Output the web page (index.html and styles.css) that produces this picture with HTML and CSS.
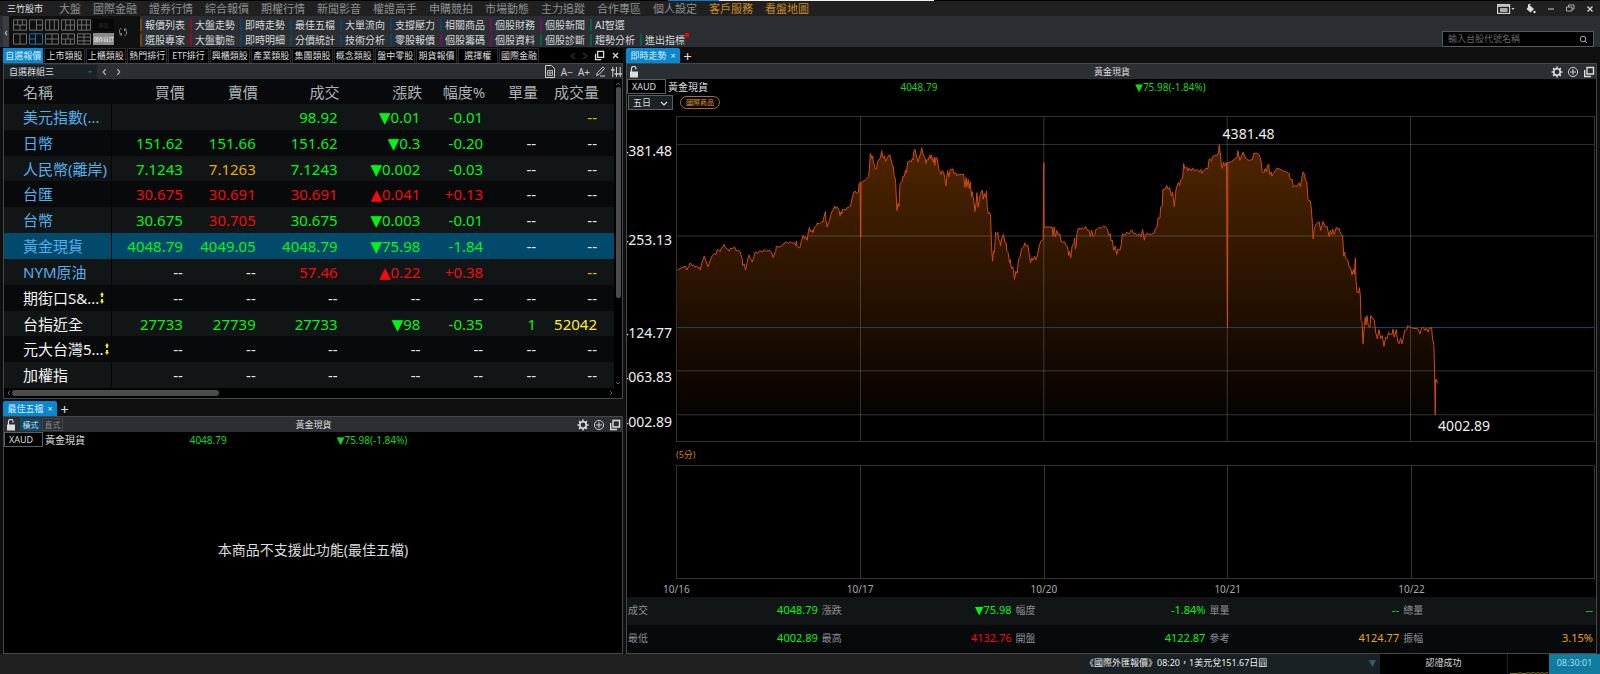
FILE: index.html
```html
<!DOCTYPE html>
<html lang="zh-Hant">
<head>
    <meta charset="UTF-8">
    <meta name="viewport" content="width=device-width, initial-scale=1.0">
    <title>三竹股市</title>
    <link rel="stylesheet" href="styles.css">
</head>
<body>
    <!-- shared icons -->
    <svg class="icon-defs" width="0" height="0">
        <symbol id="icon-lock" viewBox="0 0 10 12">
            <rect x="1" y="5.500" width="8" height="6" fill="currentColor"/>
            <path d="M2.500 6V3a2 2 0 0 1 4.500-.5v1" fill="none" stroke="currentColor" stroke-width="1.200"/>
        </symbol>
        <symbol id="icon-gear" viewBox="0 0 12 12">
            <circle cx="6" cy="6" r="3.200" fill="none" stroke="currentColor" stroke-width="1.600"/>
            <path d="M6 .5v2M6 9.500v2M.5 6h2M9.500 6h2M2.100 2.100l1.400 1.400M8.500 8.500l1.400 1.400M2.100 9.900l1.400-1.400M8.500 3.500l1.400-1.400" stroke="currentColor" stroke-width="1.600"/>
        </symbol>
        <symbol id="icon-plus-circle" viewBox="0 0 12 12">
            <circle cx="6" cy="6" r="4.600" fill="none" stroke="currentColor" stroke-width=".9"/>
            <path d="M6 3v6M3 6h6" stroke="currentColor" stroke-width=".9"/>
        </symbol>
        <symbol id="icon-copy" viewBox="0 0 12 12">
            <path d="M4 1.500h6.500V8H4z" fill="none" stroke="currentColor" stroke-width="1.400"/>
            <path d="M1.700 4v6.500H8" fill="none" stroke="currentColor" stroke-width="1.400"/>
        </symbol>
        <symbol id="icon-updown" viewBox="0 0 4 12">
            <path d="M2 0l2 3H3v2H1V3H0zM2 12l2-3H3V7H1v2H0z" fill="currentColor"/>
        </symbol>
    </svg>

    <div class="app">
        <div class="top-edge"><span class="edge-blue"></span><span class="edge-white"></span></div>
        <nav class="menu-bar">
            <span class="brand">三竹股市</span>
            <a href="#">大盤</a>
            <a href="#">國際金融</a>
            <a href="#">證券行情</a>
            <a href="#">綜合報價</a>
            <a href="#">期權行情</a>
            <a href="#">新聞影音</a>
            <a href="#">權證高手</a>
            <a href="#">申購競拍</a>
            <a href="#">市場動態</a>
            <a href="#">主力追蹤</a>
            <a href="#">合作專區</a>
            <a href="#">個人設定</a>
            <a href="#" class="featured">客戶服務</a>
            <a href="#" class="featured">看盤地圖</a>
            <div class="window-buttons">
                <button aria-label="版面"><svg width="18" height="10" viewBox="0 0 18 10"><rect x=".6" y=".6" width="12" height="8.800" fill="none" stroke="#ccc" stroke-width="1.200"/><path d="M.6 2h12" stroke="#ddd" stroke-width="1.600"/><path d="M3 4h7.500v4H3z" fill="#aaa"/><path d="M14.500 4h3L16 6z" fill="#ddd"/></svg></button>
                <button aria-label="配色"><svg width="10" height="10" viewBox="0 0 10 10"><path d="M3.500 1l4.500 4-3.500 3.500L.5 5z" fill="#ddd"/><path d="M2.500 3V.5h2" stroke="#ddd" fill="none"/><circle cx="8.500" cy="8" r="1.200" fill="#ddd"/></svg></button>
                <button aria-label="最小化"><svg width="8" height="8" viewBox="0 0 8 8"><path d="M1 4h6" stroke="#ccc"/></svg></button>
                <button aria-label="還原"><svg width="9" height="9" viewBox="0 0 9 9"><path d="M.5 3h5.500v4H.5zM2.500 3V1h5.500v4H6" fill="none" stroke="#bbb" stroke-width=".9"/></svg></button>
                <button aria-label="關閉"><svg width="8" height="8" viewBox="0 0 8 8"><path d="M1.500 1.500l5 5M6.500 1.500l-5 5" stroke="#ddd" stroke-width="1.200"/></svg></button>
            </div>
        </nav>

        <div class="toolbar">
            <button class="collapse" aria-label="收合">‹</button>
            <div class="layouts">
                <div class="layout-grid">
                    <button aria-label="版面 1"><svg viewBox="0 0 15 12"><path d="M.5.5h14v11H.5zM.5 6h14M5 .5V6M10 .5V6M7.500 6v5.500"/></svg></button>
                    <button aria-label="版面 2"><svg viewBox="0 0 15 12"><path d="M.5.5h14v11H.5zM8 .5v11M8 6h6.500"/></svg></button>
                    <button aria-label="版面 3"><svg viewBox="0 0 15 12"><path d="M.5.5h14v11H.5zM5 .5v11M10 .5v11"/></svg></button>
                    <button aria-label="版面 4"><svg viewBox="0 0 15 12"><path d="M.5.5h14v11H.5zM5 .5v11M10 .5v11M5 6h9.500"/></svg></button>
                    <button aria-label="版面 5"><svg viewBox="0 0 15 12"><path d="M.5.5h14v11H.5zM5 .5v11M10 .5v11M.5 6h14"/></svg></button>
                    <button class="preset">預設</button>
                    <button aria-label="版面 6"><svg viewBox="0 0 15 12"><path d="M.5.5h14v11H.5zM7.500 .5v11"/></svg></button>
                    <button aria-label="版面 7" class="selected"><svg viewBox="0 0 15 12"><path d="M.5.5h14v11H.5zM7 .5v11M.5 6H7"/></svg></button>
                    <button aria-label="版面 8"><svg viewBox="0 0 15 12"><path d="M.5.5h14v11H.5zM7.500 .5v11M.5 6h14"/></svg></button>
                    <button aria-label="版面 9"><svg viewBox="0 0 15 12"><path d="M.5.5h14v11H.5zM.5 6h14M5 6v5.500M10 6v5.500M7.500 .5V6"/></svg></button>
                    <button aria-label="版面 10"><svg viewBox="0 0 15 12"><path d="M.5.5h14v11H.5zM7.500 .5v11M.5 4h14M.5 8h14"/></svg></button>
                    <button class="save">儲存自訂</button>
                </div>
                <button class="refresh" aria-label="重新整理"><svg width="10" height="12" viewBox="0 0 10 12"><path d="M3.500 2Q1 3.500 1.500 6T3.500 9M6.500 10Q9 8.500 8.500 6T6.500 3M1.500 9h2V7M8.500 3h-2v2" fill="none" stroke="#888"/></svg></button>
            </div>
            <div class="quick-links">
                <a href="#" class="brown">報價列表</a>
                <a href="#" class="red">大盤走勢</a>
                <a href="#" class="blue">即時走勢</a>
                <a href="#" class="blue">最佳五檔</a>
                <a href="#" class="blue">大單流向</a>
                <a href="#" class="blue">支撐壓力</a>
                <a href="#" class="blue">相關商品</a>
                <a href="#" class="purple">個股財務</a>
                <a href="#" class="purple">個股新聞</a>
                <a href="#" class="green">AI智選</a>
                <span></span>
                <a href="#" class="brown">選股專家</a>
                <a href="#" class="red">大盤動態</a>
                <a href="#" class="blue">即時明細</a>
                <a href="#" class="blue">分價統計</a>
                <a href="#" class="blue">技術分析</a>
                <a href="#" class="blue">零股報價</a>
                <a href="#" class="purple">個股籌碼</a>
                <a href="#" class="purple">個股資料</a>
                <a href="#" class="green">個股診斷</a>
                <a href="#" class="green">趨勢分析</a>
                <a href="#" class="green has-dot">進出指標</a>
            </div>
            <div class="search">
                <input type="text" aria-label="搜尋" placeholder="輸入台股代號名稱">
                <svg width="9" height="9" viewBox="0 0 9 9"><circle cx="4" cy="4" r="2.800" fill="none" stroke="#aaa"/><path d="M6 6l2 2" stroke="#aaa"/></svg>
            </div>
        </div>

        <main class="workspace">
            <div class="left-side">
                <div class="tab-row">
                    <div class="tabs">
                        <button class="active">自選報價</button>
                        <button>上市類股</button>
                        <button>上櫃類股</button>
                        <button>熱門排行</button>
                        <button>ETF排行</button>
                        <button>興櫃類股</button>
                        <button>產業類股</button>
                        <button>集團類股</button>
                        <button>概念類股</button>
                        <button>盤中零股</button>
                        <button>期貨報價</button>
                        <button>選擇權</button>
                        <button>國際金融</button>
                    </div>
                    <div class="tab-tools">
                        <button class="dim" aria-label="上一頁"><svg width="6" height="8" viewBox="0 0 6 8"><path d="M5 1L1 4l4 3" fill="none" stroke="#444"/></svg></button>
                        <button class="dim" aria-label="下一頁"><svg width="6" height="8" viewBox="0 0 6 8"><path d="M1 1l4 3-4 3" fill="none" stroke="#444"/></svg></button>
                        <button aria-label="複製視窗"><svg width="11" height="11"><use href="#icon-copy"/></svg></button>
                        <button aria-label="關閉"><svg width="9" height="9" viewBox="0 0 9 9"><path d="M2 2l5 5M7 2L2 7" stroke="#ddd" stroke-width="1.200"/></svg></button>
                    </div>
                </div>
                <section class="panel quotes">
                    <div class="panel-bar">
                        <div class="select-box group-select">
                            <select aria-label="自選群組"><option>自選群組三</option></select>
                            <svg width="6" height="4" viewBox="0 0 6 4"><path d="M1 1h4L3 3.500z" fill="#2f6076"/></svg>
                        </div>
                        <button class="step" aria-label="上一組"><svg width="5" height="8" viewBox="0 0 6 10"><path d="M4.500 1.500L1.500 5l3 3.500" fill="none" stroke="#ccc" stroke-width="1.300"/></svg></button>
                        <button class="step" aria-label="下一組"><svg width="5" height="8" viewBox="0 0 6 10"><path d="M1.500 1.500l3 3.500-3 3.500" fill="none" stroke="#ccc" stroke-width="1.300"/></svg></button>
                        <div class="bar-tools">
                            <button aria-label="報表"><svg width="12" height="13" viewBox="0 0 12 13"><path d="M1.500.5h6l3 3v9h-9z" fill="none" stroke="#ccc"/><path d="M3.500 5.500h5v5h-5zM3.500 8h5M6 5.500v5" fill="none" stroke="#ccc" stroke-width=".8"/></svg></button>
                            <button>A−</button>
                            <button>A+</button>
                            <button aria-label="編輯"><svg width="11" height="11" viewBox="0 0 11 11"><path d="M1.500 9.500l1-3L8 1l1.500 1.500-5.500 6zM5 10h5" fill="none" stroke="#ccc"/></svg></button>
                            <button aria-label="設定"><svg width="11" height="12" viewBox="0 0 11 12"><path d="M1.800 1v10M5.500 1v10M9.200 1v10" stroke="#ccc"/><path d="M0 4h3.600M3.700 8h3.600M7.400 8H11" stroke="#ccc" stroke-width="1.600"/></svg></button>
                        </div>
                    </div>
                    <div class="table-area">
                        <table>
                            <thead>
                                <tr><th class="name">名稱</th><th class="c-bid">買價</th><th class="c-ask">賣價</th><th class="c-deal">成交</th><th class="c-chg">漲跌</th><th class="c-pct">幅度%</th><th class="c-unit">單量</th><th class="vol">成交量</th></tr>
                            </thead>
                            <tbody>
                                <tr><td class="name">美元指數(...</td><td></td><td></td><td class="down">98.92</td><td class="down">▼0.01</td><td class="down">-0.01</td><td></td><td class="vol dim-yellow">--</td></tr>
                                <tr><td class="name">日幣</td><td class="down">151.62</td><td class="down">151.66</td><td class="down">151.62</td><td class="down">▼0.3</td><td class="down">-0.20</td><td>--</td><td class="vol">--</td></tr>
                                <tr><td class="name">人民幣(離岸)</td><td class="down">7.1243</td><td class="flat">7.1263</td><td class="down">7.1243</td><td class="down">▼0.002</td><td class="down">-0.03</td><td>--</td><td class="vol">--</td></tr>
                                <tr><td class="name">台匯</td><td class="up">30.675</td><td class="up">30.691</td><td class="up">30.691</td><td class="up">▲0.041</td><td class="up">+0.13</td><td>--</td><td class="vol">--</td></tr>
                                <tr><td class="name">台幣</td><td class="down">30.675</td><td class="up">30.705</td><td class="down">30.675</td><td class="down">▼0.003</td><td class="down">-0.01</td><td>--</td><td class="vol">--</td></tr>
                                <tr class="current"><td class="name">黃金現貨</td><td class="down">4048.79</td><td class="down">4049.05</td><td class="down">4048.79</td><td class="down">▼75.98</td><td class="down">-1.84</td><td>--</td><td class="vol">--</td></tr>
                                <tr><td class="name">NYM原油</td><td>--</td><td>--</td><td class="up">57.46</td><td class="up">▲0.22</td><td class="up">+0.38</td><td></td><td class="vol dim-yellow">--</td></tr>
                                <tr><td class="name domestic">期街口S&amp;...<svg class="mark" width="4" height="12"><use href="#icon-updown"/></svg></td><td>--</td><td>--</td><td>--</td><td>--</td><td>--</td><td>--</td><td class="vol">--</td></tr>
                                <tr><td class="name domestic">台指近全</td><td class="down">27733</td><td class="down">27739</td><td class="down">27733</td><td class="down">▼98</td><td class="down">-0.35</td><td class="down">1</td><td class="vol yellow">52042</td></tr>
                                <tr><td class="name domestic">元大台灣5...<svg class="mark" width="4" height="12"><use href="#icon-updown"/></svg></td><td>--</td><td>--</td><td>--</td><td>--</td><td>--</td><td>--</td><td class="vol">--</td></tr>
                                <tr><td class="name domestic">加權指</td><td>--</td><td>--</td><td>--</td><td>--</td><td>--</td><td>--</td><td class="vol">--</td></tr>
                            </tbody>
                        </table>
                        <div class="scroll-v"><svg width="6" height="6" viewBox="0 0 6 6"><path d="M1 4l2-2 2 2" fill="none" stroke="#666"/></svg><span class="thumb"></span><span class="rest"></span><svg width="6" height="6" viewBox="0 0 6 6"><path d="M1 2l2 2 2-2" fill="none" stroke="#666"/></svg></div>
                    </div>
                    <div class="scroll-h"><svg width="6" height="6" viewBox="0 0 6 6"><path d="M4 1L2 3l2 2" fill="none" stroke="#666"/></svg><span class="thumb"></span><span class="rest"></span><svg width="6" height="6" viewBox="0 0 6 6"><path d="M2 1l2 2-2 2" fill="none" stroke="#666"/></svg></div>
                </section>

                <div class="tab-row lower">
                    <button class="win-tab">最佳五檔 <span>×</span></button>
                    <button class="add" aria-label="新增分頁">+</button>
                </div>
                <section class="panel depth">
                    <div class="panel-bar titled">
                        <div class="bar-left">
                            <button aria-label="鎖定"><svg width="10" height="12"><use href="#icon-lock"/></svg></button>
                            <button class="mode on">橫式</button>
                            <button class="mode">直式</button>
                        </div>
                        <h2>黃金現貨</h2>
                        <div class="bar-right">
                            <button aria-label="設定"><svg width="12" height="12"><use href="#icon-gear"/></svg></button>
                            <button aria-label="加入"><svg width="12" height="12"><use href="#icon-plus-circle"/></svg></button>
                            <button aria-label="複製視窗"><svg width="12" height="12"><use href="#icon-copy"/></svg></button>
                        </div>
                    </div>
                    <div class="summary">
                        <input type="text" aria-label="商品代號" value="XAUD">
                        <span>黃金現貨</span>
                        <span class="num">4048.79</span>
                        <span class="num">▼75.98(-1.84%)</span>
                    </div>
                    <p class="unsupported">本商品不支援此功能(最佳五檔)</p>
                </section>
            </div>

            <div class="right-side">
                <div class="tab-row">
                    <button class="win-tab">即時走勢 <span>×</span></button>
                    <button class="add" aria-label="新增分頁">+</button>
                </div>
                <section class="panel trend">
                    <div class="panel-bar titled">
                        <div class="bar-left">
                            <button aria-label="鎖定"><svg width="10" height="12"><use href="#icon-lock"/></svg></button>
                        </div>
                        <h2>黃金現貨</h2>
                        <div class="bar-right">
                            <button aria-label="設定"><svg width="12" height="12"><use href="#icon-gear"/></svg></button>
                            <button aria-label="加入"><svg width="12" height="12"><use href="#icon-plus-circle"/></svg></button>
                            <button aria-label="複製視窗"><svg width="12" height="12"><use href="#icon-copy"/></svg></button>
                        </div>
                    </div>
                    <div class="summary">
                        <input type="text" aria-label="商品代號" value="XAUD">
                        <span>黃金現貨</span>
                        <span class="num">4048.79</span>
                        <span class="num">▼75.98(-1.84%)</span>
                    </div>
                    <div class="range-row">
                        <div class="select-box range-select">
                            <select aria-label="期間"><option>五日</option></select>
                            <svg width="8" height="6" viewBox="0 0 8 6"><path d="M1 1l3 3 3-3" fill="none" stroke="#ddd" stroke-width="1.200"/></svg>
                        </div>
                        <span class="badge">國際商品</span>
                    </div>

                    <div class="chart">
                        <div class="price-row">
                            <div class="axis">
                                <span class="tick t1">4381.48</span>
                                <span class="tick t2">4253.13</span>
                                <span class="tick t3">4124.77</span>
                                <span class="tick t4">4063.83</span>
                                <span class="tick t5">4002.89</span>
                            </div>
                            <div class="plot">
                                <svg viewBox="0 0 2755 981" preserveAspectRatio="none">
                                    <defs>
                                        <linearGradient id="area-fill" gradientUnits="userSpaceOnUse" x1="0" y1="83" x2="0" y2="901">
                                            <stop offset="0" stop-color="#502500"/>
                                            <stop offset="1" stop-color="#050200"/>
                                        </linearGradient>
                                    </defs>
                                    <path id="area" fill="url(#area-fill)"/>
                                    <g class="grid-lines">
                                        <path d="M551 0V981M1102 0V981M1653 0V981M2204 0V981M0 83H2755M0 360H2755M0 768H2755M0 901H2755"/>
                                        <path class="reference" d="M0 637H2755"/>
                                    </g>
                                    <path id="line"/>
                                </svg>
                                <span class="peak">4381.48</span>
                                <span class="trough">4002.89</span>
                            </div>
                        </div>
                        <div class="volume-label">(5分)</div>
                        <div class="volume-row"><span></span><span></span><span></span><span></span><span></span></div>
                        <div class="dates"><span>10/16</span><span>10/17</span><span>10/20</span><span>10/21</span><span>10/22</span></div>
                    </div>

                    <dl class="stats">
                        <div><dt>成交</dt><dd class="down">4048.79</dd></div>
                        <div><dt>漲跌</dt><dd class="down">▼75.98</dd></div>
                        <div><dt>幅度</dt><dd class="down">-1.84%</dd></div>
                        <div><dt>單量</dt><dd class="down">--</dd></div>
                        <div><dt>總量</dt><dd class="down">--</dd></div>
                        <div><dt>最低</dt><dd class="down">4002.89</dd></div>
                        <div><dt>最高</dt><dd class="up">4132.76</dd></div>
                        <div><dt>開盤</dt><dd class="down">4122.87</dd></div>
                        <div><dt>參考</dt><dd class="flat">4124.77</dd></div>
                        <div><dt>振幅</dt><dd class="flat">3.15%</dd></div>
                    </dl>
                </section>
            </div>
        </main>

        <footer class="status-bar">
            <div class="ticker"><span>《國際外匯報價》08:20，1美元兌151.67日圓</span><span class="ticker-arrow">▼</span></div>
            <div class="auth">認證成功</div>
            <div class="traffic"><svg width="38" height="3" viewBox="0 0 38 3"><path d="M0 2.500h8l2-1 2 1h4l2-1 2 1 3-1 3 1 2-1 2 1 2-1 2 1 4-1" fill="none" stroke="#7a7a18"/></svg></div>
            <div class="clock">08:30:01</div>
        </footer>
    </div>

    <script>
        // Price points, each part relative to its own offset
        const parts = [
            { dx: -169, dy: -169, points: '170,632 184,625 190,622 195,621 198,632 204,622 209,610 214,619 219,617 224,624 227,619 231,624 236,624 239,632 243,612 247,600 251,589 256,605 262,622 268,605 275,589 281,581 286,586 290,570 294,572 299,575 303,564 308,561 310,554 315,565 321,569 326,575 329,567 336,567 342,562 347,574 352,572 359,577 362,590 365,598 366,618 371,614 375,632 379,612 383,595 386,586 389,597 393,602 395,608 400,592 403,580 407,577 411,583 417,574 427,577 431,570 438,575 446,573 453,579 458,594 463,580 466,575 467,560 475,563 485,559 490,551 500,548 504,552 509,546 514,551 520,549 526,558 527,544 530,561 538,565 543,543 548,527 552,538 555,530 560,542 564,513 567,503 570,517 575,511 578,519 582,502 588,497 590,490 598,492 603,487 607,487 610,473 615,455 616,478 620,502 625,487 628,480 632,460 638,450 643,438 647,446 650,441 655,447 659,468 662,455 664,462 667,448 671,450 678,449 680,443 690,440 694,420 700,396 704,393 708,400 714,396 716,370 719,367 721,532 722,367 728,364 735,360 745,349 748,310 750,279 755,295 757,287 759,305 763,318 765,327 769,325 771,303 776,299 780,292 784,271 787,289 790,294 792,286 796,303 800,295 805,285 808,283 811,293 814,305 816,318 819,318 821,345 824,352 826,370 829,440 830,452 833,430 836,440 839,370 845,365 848,348 852,348 855,331 858,338 862,305 868,301 872,305 876,295 878,299 880,275 884,267 886,275 890,293 894,305 897,290 901,280 904,262 908,280 911,288 915,295 917,310 920,298 924,299 928,284 931,295 933,283 936,296 939,306 942,290 943,316 947,292 950,293 953,308 956,330 960,336 962,343 966,331 970,335 973,352 977,377 980,345 982,331 986,350 990,329 998,326 1001,340 1007,338 1010,347 1016,343 1022,343' },
            { dx: 851, dy: -49, points: '10,222 14,262 18,232 20,260 24,238 27,265 30,245 34,290 36,275 41,305 44,335 47,315 50,278 54,322 58,295 61,280 66,270 69,298 72,280 76,292 79,273 81,320 84,342 88,338 91,345 94,440 97,485 100,455 103,458 106,398 110,402 113,398 115,418 119,425 121,438 125,415 130,405 134,428 138,430 140,455 144,460 148,490 150,480 154,508 158,502 160,515 163,540 167,515 171,522 175,480 180,472 184,448 190,443 194,430 198,440 203,437 207,462 211,490 215,475 218,483 223,470 227,482 233,462 238,435 244,423 249,420 251,187 252,382 276,382 279,410 282,382 286,412 290,392 294,405 299,402 304,428 314,427 318,438 322,440 326,468 328,455 332,475 336,440 341,432 344,415 346,448 349,435 350,405 355,385 361,389 364,384 370,389 376,380 382,392 387,392 391,410 395,392 399,410 405,404 406,391 413,387 418,382 424,385 430,379 437,382 442,388 446,407 451,402 453,424 457,422 461,452 466,440 470,465 474,448 480,452 483,438 487,403 495,406 500,398 507,402 515,390 521,402 528,402 532,408 538,402 543,412 548,389 553,422 556,405 561,401 567,405 575,403 583,400 586,388 591,382 594,355 600,355 602,322 607,318 609,268 616,268 620,256 625,268 629,262 634,288 638,276 643,320 648,270 652,255 656,247 659,256 663,238 668,235 671,190 675,205 680,200 684,212 688,203 694,212 698,203 703,212 711,208 718,215 723,208 726,220 730,212 738,205 744,205 748,175 755,182 757,170 764,165 772,165 776,155 778,133 782,165 784,188 787,205 791,185 794,198 797,188 800,187 803,686 804,187 815,184 824,176 831,172 834,151 840,180 846,165 850,155 856,170 862,178 868,180 878,178 881,160 890,158 897,162 902,175 905,190 907,215 912,218 916,205 920,215 923,195 927,193 929,222 934,215 936,228 942,218 950,205 960,206 970,212 982,217 988,220 991,238 997,238 1001,262 1007,255 1012,260 1018,248 1022,260 1026,235 1030,215 1035,225 1037,240 1041,243 1045,300 1052,303 1055,330 1058,372 1060,418' },
            { dx: 1691, dy: 11, points: '224,325 230,312 238,306 243,332 250,305 257,322 262,320 268,350 272,332 276,345 279,328 284,345 290,322 294,330 298,325 302,340 309,348 312,410 315,398 317,415 321,418 325,425 329,445 333,445 337,467 341,450 344,465 347,415 349,485 352,520 357,520 359,505 362,530 364,605 367,608 370,675 374,620 377,595 379,618 382,590 386,622 391,625 393,590 399,597 404,605 408,640 413,660 418,632 423,660 428,650 433,683 438,655 442,660 447,640 450,648 453,645 457,648 460,630 464,655 470,632 474,668 478,675 483,658 487,675 492,655 495,635 501,633 504,620 510,624 520,628 535,630 541,645 546,628 551,625 556,635 560,628 566,640 568,630 576,626 579,660 583,680 585,760 587,890 588,785 590,782 592,793 595,790' }
        ];

        const coords = [];
        parts.forEach(part => {
            part.points.split(' ').forEach(pair => {
                const [x, y] = pair.split(',').map(Number);
                coords.push(`${x + part.dx} ${y + part.dy}`);
            });
        });

        const linePath = 'M' + coords.join('L');
        document.getElementById('line').setAttribute('d', linePath);
        document.getElementById('area').setAttribute('d', linePath + 'V901H1Z');
    </script>
</body>
</html>
```

FILE: styles.css
```css
* {
    box-sizing: border-box;
}

body {
    margin: 0;
    background-color: #000;
    color: #ddd;
    font-family: "Noto Sans", "DejaVu Sans", "Noto Sans CJK TC", sans-serif;
    font-size: 10px;
    line-height: 14px;
}

button,
input,
select {
    font: inherit;
    color: inherit;
    background: none;
    border: 0;
    padding: 0;
    margin: 0;
}

button {
    display: flex;
    align-items: center;
    justify-content: center;
    white-space: nowrap;
    cursor: pointer;
}

a {
    color: inherit;
    text-decoration: none;
    white-space: nowrap;
}

.icon-defs {
    position: absolute;
}

.app {
    display: flex;
    flex-direction: column;
    height: 100vh;
    min-height: 600px;
    overflow: hidden;
}

.top-edge {
    display: flex;
    height: 1px;
    flex: none;
    padding-left: 41.75%;
}

.edge-blue {
    width: 5.5%;
    background-color: #0a78d0;
}

.edge-white {
    width: 23%;
    background-color: #eee;
}

/* menu bar */
.menu-bar {
    display: flex;
    align-items: center;
    gap: 12px;
    height: 15px;
    flex: none;
    padding: 0 6px 0 7px;
    background-color: #202020;
    color: #8c9093;
    font-size: 11px;
}

.brand {
    color: #e0e0e0;
    font-size: 9px;
    margin-right: 4px;
}

.featured {
    color: #c88c1e;
}

.window-buttons {
    display: flex;
    align-items: center;
    gap: 11px;
    margin-left: auto;
}

/* toolbar */
.toolbar {
    display: flex;
    height: 31px;
    flex: none;
    padding-left: 3px;
    background-color: #2b2f33;
}

.collapse {
    width: 6px;
    background-color: #3a3e42;
}

.layouts {
    display: flex;
    align-items: center;
    gap: 4px;
    width: 131px;
    padding-left: 4px;
    background-color: #101010;
}

.layout-grid {
    display: grid;
    grid-template-columns: repeat(5, 14px) 21px;
    grid-auto-rows: 12px;
    gap: 2px;
}

.layout-grid svg {
    width: 14px;
    height: 12px;
    fill: none;
    stroke: #777;
    stroke-width: 1;
}

.layout-grid .selected svg {
    stroke: #1e7ab8;
}

.preset,
.save {
    font-size: 5px;
}

.preset {
    background-color: #080808;
    color: #333;
}

.save {
    background-color: #8a8a8a;
    color: #fff;
}

.quick-links {
    display: grid;
    grid-template-columns: repeat(11, 50px);
    grid-template-rows: 15px 15px;
    align-items: center;
    padding-top: 1px;
    color: #d8dadc;
}

.quick-links a {
    border-left-width: 2px;
    border-left-style: solid;
    padding-left: 3px;
    line-height: 12px;
}

.brown {
    border-color: #6e4a0c;
}

.red {
    border-color: #a00a14;
}

.blue {
    border-color: #0c4462;
}

.purple {
    border-color: #6a1560;
}

.green {
    border-color: #086048;
}

.has-dot {
    position: relative;
}

.has-dot::after {
    content: "";
    position: absolute;
    top: -1px;
    right: 1px;
    width: 4px;
    height: 4px;
    background-color: #f00;
}

.search {
    display: flex;
    align-items: center;
    align-self: flex-end;
    width: 152px;
    height: 16px;
    margin: 0 6px 0 auto;
    padding: 0 5px;
    border: 1px solid #555a5e;
    background-color: #000;
}

.search input {
    flex: 1;
    min-width: 0;
    font-size: 9px;
}

.search input::placeholder {
    color: #666;
}

/* workspace */
.workspace {
    display: grid;
    grid-template-columns: 620fr 971fr;
    gap: 3px;
    flex: 1;
    min-height: 0;
    padding: 0 3px;
    background-color: #0f0f0f;
}

.left-side,
.right-side {
    display: flex;
    flex-direction: column;
    min-width: 0;
    min-height: 0;
}

.tab-row {
    display: flex;
    flex: none;
    height: 16px;
    padding-top: 1px;
}

.tab-row.lower {
    height: 17px;
    padding-top: 2px;
}

.tabs {
    display: grid;
    grid-template-columns: repeat(13, 1fr);
    gap: 1px;
    width: 86.5%;
}

.tabs button {
    background-color: #000;
    border: 1px solid #2c2c2c;
    font-size: 9px;
}

.tabs button.active,
.win-tab {
    background-color: #0c86cc;
    border-color: #0c86cc;
    color: #d8f0ff;
}

.tab-tools {
    display: flex;
    flex: 1;
    justify-content: flex-end;
    gap: 6px;
    padding-right: 3px;
    background-color: #000;
}

.win-tab {
    width: 54px;
    gap: 4px;
    border-radius: 2px 2px 0 0;
    font-size: 9px;
}

.add {
    width: 15px;
    font-size: 15px;
}

.panel {
    display: flex;
    flex-direction: column;
    min-height: 0;
    border: 1px solid #44484b;
    background-color: #000;
}

.panel-bar {
    display: flex;
    align-items: center;
    flex: none;
    height: 15px;
    background-color: #2b2f33;
}

.panel-bar h2 {
    margin: 0;
    font-size: 9px;
    font-weight: normal;
    color: #ddd;
}

.bar-left,
.bar-right {
    display: flex;
    flex: 1;
    align-items: center;
    gap: 4px;
}

.bar-left {
    padding-left: 2px;
}

.bar-right {
    justify-content: flex-end;
    padding-right: 1px;
}

.select-box {
    position: relative;
    background-color: #1b2226;
}

.select-box select {
    display: block;
    appearance: none;
    width: 100%;
    height: 100%;
}

.select-box svg {
    position: absolute;
    top: 5px;
    right: 4px;
}

.group-select {
    width: 93px;
    height: 14px;
    padding-left: 5px;
    font-size: 9px;
}

.step {
    width: 14px;
}

.bar-tools {
    display: flex;
    align-items: center;
    gap: 5px;
    margin-left: auto;
    color: #ccc;
}

.mode {
    width: 21px;
    height: 13px;
    border: 1px solid #44484b;
    color: #8c9093;
    font-size: 8px;
}

.mode.on {
    background-color: #0e4a66;
    border-color: #0e4a66;
    color: #cde;
}

.bar-left .mode + .mode {
    margin-left: -3px;
}

/* quotes */
.quotes {
    flex: 336;
}

.table-area {
    display: flex;
    flex: 1;
    min-height: 0;
}

table {
    flex: 1;
    height: 100%;
    border-collapse: collapse;
    table-layout: fixed;
    font-size: 15px;
    line-height: 20px;
    color: #e8e8e8;
}

th,
td {
    padding: 0 4px 0 0;
    text-align: right;
    font-weight: normal;
    white-space: nowrap;
}

th {
    height: 25px;
    padding-right: 2px;
    color: #aeb2b5;
    background-color: #07090a;
}

tbody tr {
    background-color: #07090b;
}

tbody tr:nth-child(odd) {
    background-color: #121515;
}

tbody tr.current {
    background-color: #024a6c;
}

.name {
    width: 108px;
    padding: 0 0 0 19px;
    text-align: left;
}

td.name {
    color: #52b0ec;
    border-right: 1px solid #050607;
}

td.name.domestic {
    color: #f4f4f4;
}

.c-bid {
    width: 75px;
}

.c-ask {
    width: 73px;
}

.c-deal {
    width: 82px;
}

.c-chg {
    width: 83px;
}

.c-pct {
    width: 63px;
}

.c-unit {
    width: 53px;
}

.vol {
    width: 74px;
    padding-right: 17px;
}

th.vol {
    padding-right: 15px;
}

.mark {
    color: #f0e010;
    margin-left: 1px;
}

.down {
    color: #00f514;
}

.up {
    color: #f50a0a;
}

.flat {
    color: #eaa80a;
}

.yellow {
    color: #fff01e;
}

.dim-yellow {
    color: #d4c40a;
}

.scroll-v {
    display: flex;
    flex-direction: column;
    align-items: center;
    width: 8px;
    padding: 2px 0;
}

.scroll-v .thumb {
    flex: 72;
    width: 5px;
    border-radius: 2px;
    background-color: #4c4c4c;
}

.scroll-v .rest {
    flex: 28;
}

.scroll-h {
    display: flex;
    align-items: center;
    flex: none;
    height: 10px;
    padding: 0 8px 0 2px;
}

.scroll-h .thumb {
    flex: 35;
    height: 6px;
    border-radius: 3px;
    background-color: #4c4c4c;
}

.scroll-h .rest {
    flex: 66;
}

/* depth */
.depth {
    flex: 237;
}

.summary {
    display: grid;
    grid-template-columns: 39px 70fr 114fr 181fr 215fr;
    align-items: center;
    flex: none;
    height: 15px;
    color: #ddd;
}

.trend .summary {
    grid-template-columns: 39px 100fr 172fr 269fr 391fr;
}

.summary span {
    padding-left: 2px;
}

.summary .num {
    color: #10d820;
    text-align: right;
}

.summary input {
    width: 100%;
    height: 15px;
    padding: 0 4px;
    border: 1px solid #5a5e61;
    background-color: #000;
    font-size: 9px;
}

.unsupported {
    display: flex;
    flex: 1;
    align-items: center;
    justify-content: center;
    margin: 0;
    font-size: 14px;
}

/* trend */
.trend {
    flex: 1;
}

.range-row {
    display: flex;
    align-items: center;
    flex: none;
    gap: 7px;
    height: 16px;
    padding-left: 1px;
}

.range-select {
    width: 45px;
    height: 15px;
    padding-left: 4px;
    border: 1px solid #5a5e61;
    font-size: 9px;
}

.badge {
    width: 40px;
    height: 13px;
    border: 1px solid #a87414;
    border-radius: 7px;
    color: #e0a020;
    font-size: 7px;
    line-height: 11px;
    text-align: center;
}

.chart {
    display: flex;
    flex-direction: column;
    flex: 1;
    min-height: 0;
    padding: 6px 1px 0 0;
}

.price-row {
    display: flex;
    flex: 327;
    min-height: 0;
}

.axis {
    position: relative;
    width: 49px;
    overflow: hidden;
    font-size: 14px;
    color: #f0f0f0;
}

.tick {
    position: absolute;
    right: 4px;
}

.t1 {
    top: 8.5%;
}

.t2 {
    top: 36%;
}

.t3 {
    top: 64.500%;
}

.t4 {
    top: 78%;
}

.t5 {
    top: 91.500%;
}

.plot {
    position: relative;
    flex: 1;
    border: 1px solid #333;
}

.plot svg {
    position: absolute;
    width: 100%;
    height: 100%;
}

.plot path {
    vector-effect: non-scaling-stroke;
}

.grid-lines path {
    fill: none;
    stroke: rgba(255, 255, 255, 0.2);
}

.grid-lines .reference {
    stroke: #124a60;
}

#line {
    fill: none;
    stroke: #d04c10;
}

.peak,
.trough {
    position: absolute;
    font-size: 14px;
    color: #f0f0f0;
}

.peak {
    left: 59.500%;
    top: 3%;
}

.trough {
    left: 83%;
    top: 93%;
}

.volume-label {
    flex: none;
    height: 23px;
    padding-left: 49px;
    color: #d07c1c;
    font-size: 9px;
    line-height: 26px;
}

.volume-row {
    display: grid;
    grid-template-columns: repeat(5, 1fr);
    flex: 112;
    margin-left: 49px;
    border: 1px solid #333;
}

.volume-row span + span {
    border-left: 1px solid #333;
}

.dates {
    display: grid;
    grid-template-columns: repeat(5, 1fr);
    flex: none;
    height: 18px;
    margin-left: 36px;
    padding-right: 13px;
    color: #aaa;
    line-height: 20px;
}

.stats {
    display: grid;
    grid-template-columns: repeat(5, 1fr);
    grid-auto-rows: 28px;
    flex: none;
    margin: 0;
    background-color: #07090b;
}

.stats div {
    display: flex;
    align-items: center;
    justify-content: space-between;
    padding: 0 3px 3px 1px;
}

.stats div:nth-child(-n+5) {
    background-color: #121515;
}

.stats dt {
    color: #8c9093;
}

.stats dd {
    margin: 0;
    font-size: 11px;
}

/* status bar */
.status-bar {
    display: flex;
    justify-content: flex-end;
    flex: none;
    height: 20px;
    background-color: #202020;
    font-size: 9px;
    line-height: 18px;
}

.ticker {
    display: flex;
    justify-content: space-between;
    width: 299px;
    padding: 0 4px;
    background-color: #1a2125;
    color: #eee;
}

.ticker-arrow {
    color: #2f6076;
}

.auth {
    width: 127px;
    background-color: #000;
    text-align: center;
}

.traffic {
    display: flex;
    align-items: flex-end;
    justify-content: center;
    width: 41px;
    margin-left: 1px;
    background-color: #000;
}

.clock {
    width: 51px;
    background-color: #107ca0;
    color: #a8dcf0;
    text-align: center;
}
```
